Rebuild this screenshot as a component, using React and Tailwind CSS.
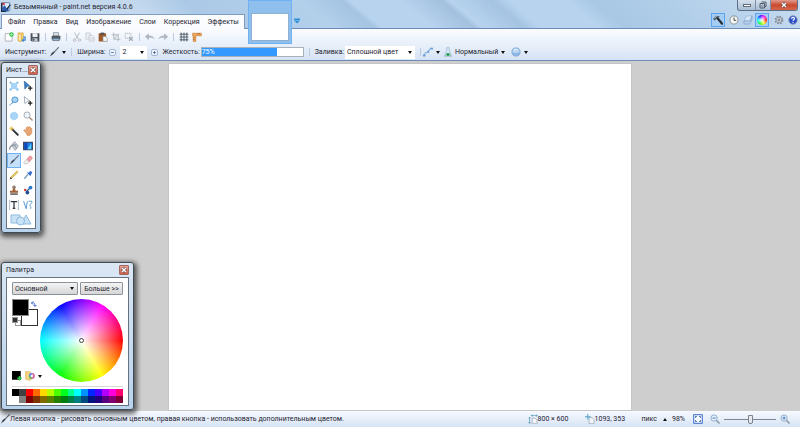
import { useState } from 'react'

// ── Data ───────────────────────────────────────────────────────────────────────

const MENU = ['Файл', 'Правка', 'Вид', 'Изображение', 'Слои', 'Коррекция', 'Эффекты']

const SWATCHES = [
  '#000000', '#404040', '#ff0000', '#ff6a00', '#ffd800', '#b6ff00', '#4cff00', '#00ff21',
  '#00ff90', '#00ffff', '#0094ff', '#0026ff', '#4800ff', '#b200ff', '#ff00dc', '#ff006e',
  '#ffffff', '#808080', '#7f0000', '#7f3300', '#7f6a00', '#5b7f00', '#267f00', '#007f0e',
  '#007f46', '#007f7f', '#004a7f', '#00137f', '#21007f', '#57007f', '#7f006e', '#7f0037',
]

// ── Icons ──────────────────────────────────────────────────────────────────────

function Icon({ size = 'size-[10px]', children }) {
  return (
    <svg className={`${size} shrink-0`} viewBox="0 0 16 16" fill="none" aria-hidden="true">
      {children}
    </svg>
  )
}

const AppIcon = () => (
  <Icon>
    <path d="M2 1h12v13H2z" fill="#dfe9f6" stroke="#3b5f96" />
    <path d="M2 9l4-4 3 5 3-2v7H2z" fill="#2f62b5" />
    <path d="M2 1h4v4H2z" fill="#c9474a" />
    <path d="M1 1v14h7" stroke="#1d2d4d" strokeWidth="2" />
    <path d="M15 4L9 12" stroke="#1a2b4c" strokeWidth="2" />
  </Icon>
)

const NewIcon = () => (
  <Icon>
    <path d="M2 2.500h8l3 3v9H2z" fill="#fff" stroke="#8a9096" />
    <circle cx="12" cy="4" r="3.500" fill="#35c24a" />
    <path d="M12 2v4M10 4h4" stroke="#d9ffd9" />
  </Icon>
)

const OpenIcon = () => (
  <Icon>
    <path d="M2 1.500h8v13H2z" fill="#f6d270" stroke="#d6a33a" />
    <path d="M2 1.500l5 3v11l-5-2z" fill="#ffe9a6" stroke="#d6a33a" />
    <path d="M10 8h3v5H9" stroke="#3d86d8" strokeWidth="2" />
    <path d="M7 13l4-3v6z" fill="#3d86d8" />
  </Icon>
)

const SaveIcon = () => (
  <Icon>
    <path d="M1 2h14v13H3l-2-2z" fill="#4b5159" />
    <rect x="4" y="2" width="8" height="6" fill="#eef2f7" />
    <rect x="4" y="10" width="8" height="5" fill="#c5ccd6" />
    <rect x="5" y="11" width="2" height="3" fill="#33383e" />
  </Icon>
)

const PrintIcon = () => (
  <Icon>
    <path d="M4 1h8v5H4z" fill="#dfe5ec" stroke="#6b7684" />
    <rect x="1" y="6" width="14" height="6" rx="1" fill="#4f5863" />
    <rect x="3" y="10" width="10" height="4" fill="#90b8e0" stroke="#59636f" />
  </Icon>
)

const CutIcon = () => (
  <Icon>
    <path d="M4 1l6 10M12 1L6 11" stroke="#b4bac3" strokeWidth="1.500" />
    <circle cx="4" cy="13" r="2" stroke="#b4bac3" strokeWidth="1.500" />
    <circle cx="12" cy="13" r="2" stroke="#b4bac3" strokeWidth="1.500" />
  </Icon>
)

const CopyIcon = () => (
  <Icon>
    <path d="M1.500 1.500h7v10h-7z" fill="#eceff3" stroke="#bcc1c9" />
    <path d="M6.500 5.500h5l3 3v6h-8z" fill="#f2f4f7" stroke="#b4bac3" />
    <path d="M8 9.500h5M8 11.500h5" stroke="#c5c9d0" />
  </Icon>
)

const PasteIcon = () => (
  <Icon>
    <rect x="1" y="2" width="12" height="13" rx="1" fill="#9c5a2c" />
    <rect x="4" y="1" width="6" height="3" fill="#4a4f56" />
    <path d="M8 7h4l3 3v5H8z" fill="#f5f5f5" stroke="#8a8f96" />
  </Icon>
)

const CropIcon = () => (
  <Icon>
    <path d="M4.500 1v10.500H15M1 4.500h10.500V15M4.500 11.500l8-9" stroke="#b0b6bf" strokeWidth="1.500" />
  </Icon>
)

const DeselectIcon = () => (
  <Icon>
    <rect x="2" y="2" width="9" height="8" stroke="#b0b6bf" strokeWidth="1.500" strokeDasharray="2 1" />
    <path d="M8 8l6 6M14 8l-6 6" stroke="#a4abb5" strokeWidth="2" />
  </Icon>
)

const UndoIcon = ({ redo }) => (
  <Icon>
    <g transform={redo ? 'matrix(-1 0 0 1 16 0)' : undefined}>
      <path d="M0 7.500L6 2v3.500c5 0 8.500 2 9.500 7-2.500-3-5-3.500-9.500-3V13z" fill="#b0b7c1" />
    </g>
  </Icon>
)

const GridIcon = () => (
  <Icon>
    <path d="M3.500 1v14M8 1v14M12.500 1v14M1 3.500h14M1 8h14M1 12.500h14" stroke="#4d5764" strokeWidth="1.500" />
  </Icon>
)

const RulerIcon = () => (
  <Icon>
    <path d="M1 2h14v4H6v9H2V6H1z" fill="#efa75c" stroke="#c9762c" />
    <path d="M9 2v2M12 2v2M2 9h2M2 12h2" stroke="#8c4a12" />
  </Icon>
)

const BrushShape = () => (
  <>
    <path d="M15 1L7 9.500" stroke="#6b7580" strokeWidth="2" strokeLinecap="round" />
    <path d="M8 8l-4 4" stroke="#3a424c" strokeWidth="2.500" />
    <path d="M4.500 10.500L1 15l4.500-2.500z" fill="#3a424c" />
  </>
)

const BrushIcon = () => <Icon><BrushShape /></Icon>

const CurveIcon = () => (
  <Icon>
    <path d="M2 14C3 6 7 11 9 7s1-5 5-5" stroke="#5b92cf" strokeWidth="1.500" />
    <path d="M0 12h4v3H0zM7 6h3v3H7zM12 1h4v3h-4z" fill="#6a9fd8" />
  </Icon>
)

const FlaskIcon = () => (
  <Icon>
    <path d="M6 1h4v5l4 9H2l4-9z" fill="#dcebf7" stroke="#90aecb" />
    <path d="M5 9.500h6l2 5H3z" fill="#8fd0b0" />
    <circle cx="8" cy="12" r="2" fill="#178a4c" />
  </Icon>
)

const SphereIcon = () => (
  <Icon>
    <circle cx="8" cy="8" r="6.500" fill="#b9d6f4" stroke="#7ea6d4" strokeWidth="1.500" />
    <path d="M2 8c4 2 8 2 12 0v3l-4 3H6l-4-3z" fill="#8cb5e2" />
    <path d="M4 6c1-3 5-4 8-1-3-1-5 0-8 1z" fill="#f1f8ff" />
  </Icon>
)

const HammerIcon = () => (
  <Icon>
    <path d="M0 6l5-5 6 1.500-2 1.500v3L7 8 5 5.500 3 9z" fill="#4a5461" />
    <path d="M8 6l6.500 8" stroke="#272d35" strokeWidth="3.500" strokeLinecap="round" />
    <path d="M2 5l4-3" stroke="#b9c6d4" strokeWidth="1.500" />
  </Icon>
)

const ClockIcon = () => (
  <Icon>
    <circle cx="8" cy="8" r="6.500" fill="#f5f7f0" stroke="#9aa4ae" strokeWidth="2" />
    <path d="M8 4v4.500h3.500" stroke="#3b434c" strokeWidth="1.500" />
  </Icon>
)

const LayersIcon = () => (
  <Icon>
    <path d="M5.500 1.500h9l-3.500 8H1.500z" fill="#d5e6f8" stroke="#8fafd1" />
    <path d="M1.500 9.500H11l3.500-8v5L11 14.500H1.500z" fill="#b3cdea" stroke="#7e9fc3" />
  </Icon>
)

const GearIcon = () => (
  <Icon>
    <circle cx="8" cy="8" r="6" stroke="#7e8894" strokeWidth="2" strokeDasharray="2.700 2" />
    <circle cx="8" cy="8" r="4.500" fill="#c3cad3" stroke="#8b95a1" strokeWidth="1.500" />
    <circle cx="8" cy="8" r="1.500" fill="#6b7580" />
  </Icon>
)

const HelpIcon = () => (
  <Icon>
    <circle cx="8" cy="8" r="6.800" fill="#2a4fcc" stroke="#8b97b8" strokeWidth="1.500" />
    <path d="M5.800 6.200c0-3.200 4.600-3 4.600-.4 0 1.700-2.300 1.700-2.300 3.600M8 11v1.800" stroke="#fff" strokeWidth="1.800" />
  </Icon>
)

const ZoomIcon = ({ plus }) => (
  <Icon>
    <path d="M9.500 9.500l5 5" stroke="#8b98a8" strokeWidth="2.500" strokeLinecap="round" />
    <circle cx="6.500" cy="6.500" r="5" fill="#e6f1fc" stroke="#8fa9c6" strokeWidth="1.500" />
    <path d={plus ? 'M4 6.500h5M6.500 4v5' : 'M4 6.500h5'} stroke="#3c74b8" strokeWidth="1.500" />
  </Icon>
)

const FitIcon = () => (
  <Icon>
    <rect x="1" y="1" width="14" height="14" rx="1" fill="#f4f8ff" stroke="#5b84d6" strokeWidth="2" />
    <path d="M4 6V4h2M10 4h2v2M12 10v2h-2M6 12H4v-2" stroke="#34527f" strokeWidth="1.500" />
  </Icon>
)

const SizeIcon = () => (
  <Icon>
    <path d="M6.500 6.500h5l3 3v6h-8z" fill="#f1f4f8" stroke="#8b98a6" />
    <path d="M2.500 5v10M1 7l1.500-2L4 7M1 13l1.500 2L4 13M5 2.500h10M7 1L5 2.500 7 4M13 1l2 1.500L13 4" stroke="#3f8fb5" />
  </Icon>
)

const CursorPosIcon = () => (
  <Icon>
    <path d="M6.500 5.500h5l3 3v7h-8z" fill="#f1f4f8" stroke="#8b98a6" />
    <path d="M4.500 0v9M0 4.500h9" stroke="#4b9cc4" strokeWidth="1.500" />
  </Icon>
)

const AddSwatchIcon = () => (
  <Icon>
    <rect width="14" height="14" fill="#000" />
    <path d="M12 8v7M8.500 11.500h7" stroke="#2fd046" strokeWidth="2.500" />
  </Icon>
)

const PaletteFileIcon = () => (
  <Icon>
    <path d="M1 1h6l3 2v10l-2 2-7-2z" fill="#f5d583" stroke="#d9ac4d" />
    <circle cx="11" cy="8" r="3.500" fill="#fff" stroke="#e2589b" strokeWidth="2.500" />
    <path d="M7.500 8A3.500 3.500 0 0 1 11 4.500" stroke="#4b9df0" strokeWidth="2.500" />
    <path d="M11 11.500A3.500 3.500 0 0 1 7.500 8" stroke="#57c55b" strokeWidth="2.500" />
  </Icon>
)

const Arrow = () => (
  <svg className="h-[3px] w-[4px] shrink-0" viewBox="0 0 8 6" aria-hidden="true">
    <path d="M0 0h8L4 6z" fill="#111" />
  </svg>
)

const CloseGlyph = () => (
  <svg className="size-[6px]" viewBox="0 0 12 12" aria-hidden="true">
    <path d="M2 2l8 8M10 2l-8 8" stroke="#5d3a3a" strokeWidth="5" />
    <path d="M2 2l8 8M10 2l-8 8" stroke="#fff" strokeWidth="3" />
  </svg>
)

// Toolbox entries in grid order, left to right
const TOOLS = [
  ['Прямоугольное выделение', <>
    <rect x="3" y="3" width="10" height="10" fill="#a8d5f7" />
    <path d="M1 1h3v3H1zM12 1h3v3h-3zM1 12h3v3H1zM12 12h3v3h-3z" fill="#6fb4e8" />
  </>],
  ['Перемещение содержимого', <>
    <path d="M2 0l9 8-4 .5L3 13z" fill="#3d7fc6" stroke="#2a5e9c" />
    <path d="M11.500 8v7M8 11.500h7" stroke="#222" strokeWidth="2" />
  </>],
  ['Лассо', <>
    <ellipse cx="9.500" cy="6" rx="5" ry="4.500" fill="#a9d3f5" stroke="#4b93cf" strokeWidth="1.500" />
    <path d="M5 9c2 2 0 3-1 3s-2 2-3 3" stroke="#3c7fb8" strokeWidth="1.500" />
  </>],
  ['Перемещение выделения', <>
    <path d="M2 1l9 7-4 .5L3 12z" fill="#fff" stroke="#6c7f96" />
    <path d="M11.500 8v7M8 11.500h7" stroke="#222" strokeWidth="2" />
  </>],
  ['Овальное выделение', <circle cx="8" cy="8" r="6" fill="#a8d5f7" stroke="#7fbbe8" strokeDasharray="2 1" />],
  ['Масштаб', <>
    <path d="M9.500 9.500l5 5" stroke="#a9927c" strokeWidth="2.500" strokeLinecap="round" />
    <circle cx="6.500" cy="6.500" r="5" fill="#eef4fa" stroke="#a0a9b4" strokeWidth="1.500" />
  </>],
  ['Волшебная палочка', <>
    <path d="M5 5l9 9" stroke="#2e3136" strokeWidth="3" strokeLinecap="round" />
    <path d="M4 0v8M0 4h8M1.500 1.500l5 5M6.500 1.500l-5 5" stroke="#e8c04a" />
  </>],
  ['Рука', <path d="M4 10L1 7l1-1 3 1V3l2-2 2 1 2-1 1 2 2 1v7l-3 4H7z" fill="#e9a674" stroke="#c98650" />],
  ['Заливка', <>
    <path d="M4 7l5-6 6 7-5 7z" fill="#cdd3da" stroke="#7b8591" />
    <path d="M1 14c0-4 1-6 4-7l7-1" stroke="#8b95a1" strokeWidth="2" />
    <path d="M7 4l5 8" stroke="#8b95a1" strokeWidth="1.500" />
  </>],
  ['Градиент', <>
    <rect x="1" y="2" width="14" height="12" fill="#1e7fe8" stroke="#27364c" strokeWidth="1.500" />
    <path d="M2 3h5v10H2z" fill="#1247b8" />
    <path d="M13 4v9H7z" fill="#5fd4f5" />
  </>],
  ['Кисть', <BrushShape />],
  ['Ластик', <>
    <path d="M6 7l4-5h3l2 3-5 6z" fill="#f09ca4" stroke="#cf8888" />
    <path d="M1 12l5-5 4 4-3 3H2z" fill="#f4f0f0" stroke="#b9adad" />
  </>],
  ['Карандаш', <>
    <path d="M3 13L14 2" stroke="#b58a2b" strokeWidth="3" />
    <path d="M3 13L14 2" stroke="#f0d86c" strokeWidth="1.800" />
    <path d="M1 15l1.500-4 2.500 2.500z" fill="#444" />
  </>],
  ['Пипетка', <>
    <path d="M2 14l6-7" stroke="#8aa8c6" strokeWidth="2.500" />
    <path d="M6 4l6 6 1-3 2-3-3-3-3 3z" fill="#3c6fd0" />
  </>],
  ['Штамп', <>
    <circle cx="8" cy="3.500" r="2.800" fill="#8f8078" />
    <path d="M6.500 5h3l1 4h4v3.500h-13V9h4z" fill="#a3623a" />
    <path d="M2 14.500h12" stroke="#333" strokeWidth="2" />
  </>],
  ['Замена цвета', <>
    <path d="M5 11l7-7" stroke="#24558f" strokeWidth="2" />
    <circle cx="12" cy="4" r="3" fill="#2a78d0" />
    <circle cx="3.500" cy="8" r="2" fill="#cf3c3c" />
    <circle cx="7" cy="12" r="3" fill="#24508f" />
  </>],
  ['Текст', <>
    <path d="M3 2.500h10M8 2.500v11M6 13.500h4" stroke="#2c333c" strokeWidth="2" />
    <path d="M1 1v14M15 1v14M0 1h2M0 15h2M14 1h2M14 15h2" stroke="#7e95ae" />
  </>],
  ['Линия или кривая', <>
    <path d="M1 2l4 12L7 2" stroke="#4d93cf" strokeWidth="1.500" />
    <path d="M9 2h5c2 3-4 5-3 7s3 3 1 5" stroke="#4d93cf" strokeWidth="1.500" />
  </>],
]

// ── Shared pieces ──────────────────────────────────────────────────────────────

const Sep = () => <span className="mx-[2px] h-[8px] w-px shrink-0 bg-[#bccbe0]" />

function IconButton({ label, className = '', children }) {
  return (
    <button type="button" aria-label={label} className={`flex shrink-0 items-center ${className}`}>
      {children}
    </button>
  )
}

function Combo({ id, label, className, options }) {
  return (
    <span className={`relative flex items-center ${className}`}>
      <select id={id} aria-label={label} className="h-full w-full appearance-none bg-transparent pl-[2px]">
        {options.map((o) => <option key={o}>{o}</option>)}
      </select>
      <span className="pointer-events-none absolute right-[3px]"><Arrow /></span>
    </span>
  )
}

function FloatingPanel({ title, className, bodyClass, children }) {
  return (
    <section
      aria-label={title}
      className={`absolute rounded-[3px] border border-[#3f4a57] bg-linear-to-b from-[#dbe7f3] to-[#b9d3ec] px-[4px] pb-[3px] shadow-[1px_2px_5px_2px_rgba(0,0,0,0.6)] ${className}`}
    >
      <header className="flex h-[14px] items-center justify-between">
        <h2>{title}</h2>
        <button
          type="button"
          aria-label="Закрыть"
          className="flex size-[10px] shrink-0 items-center justify-center rounded-[1px] border border-[#a0685f] bg-linear-to-b from-[#e3a396] to-[#cf5d46]"
        >
          <CloseGlyph />
        </button>
      </header>
      <div className={`border border-[#66727f] bg-white ${bodyClass}`}>{children}</div>
    </section>
  )
}

// ── Title bar and menu ─────────────────────────────────────────────────────────

function TitleBar() {
  return (
    <div className="flex h-[14px] items-start justify-between pr-[2px]">
      <div className="flex h-[13px] items-center gap-[3px] pl-[1px]">
        <AppIcon />
        <h1>Безымянный - paint.net версия 4.0.6</h1>
      </div>
      <div className="flex h-[11px] overflow-hidden rounded-b-[3px] border border-t-0 border-[#5b6f87] bg-linear-to-b from-[#d5e0ec] to-[#a9bdd3]">
        <button type="button" aria-label="Свернуть" className="flex w-[18px] items-center justify-center border-r border-[#7b8fa8]">
          <span className="h-[3px] w-[8px] border border-[#5f6b7a] bg-white" />
        </button>
        <button type="button" aria-label="Развернуть" className="flex w-[15px] items-center justify-center border-r border-[#7b8fa8]">
          <svg className="size-[8px]" viewBox="0 0 16 16" fill="none" aria-hidden="true">
            <path d="M5 2h9v9h-3M2 5h9v9H2z" stroke="#505c6b" strokeWidth="2" />
            <path d="M5 8h3v3H5z" fill="#fff" stroke="#505c6b" />
          </svg>
        </button>
        <button type="button" aria-label="Закрыть" className="flex w-[26px] items-center justify-center bg-linear-to-b from-[#e09a8c] via-[#c9492f] to-[#d4674c]">
          <CloseGlyph />
        </button>
      </div>
    </div>
  )
}

function MenuRow() {
  return (
    <div className="flex h-[15px] items-stretch justify-between border-b border-[#6d8cb8]">
      <div className="flex">
        <nav className="-mb-px ml-[1px] flex items-center gap-[8px] border-x border-t border-[#7f9cc2] bg-[#fafcff] pl-[6px] pr-[5px]">
          {MENU.map((m) => <button key={m} type="button">{m}</button>)}
        </nav>
        <div className="relative ml-[3px] w-[44px]">
          <button
            type="button"
            aria-label="Безымянный"
            className="absolute bottom-[-16px] left-0 h-[44px] w-[44px] border border-[#6fb1f2] bg-[#8fbfec] px-[2px] pb-[2px] pt-[12px]"
          >
            <span className="block h-full border border-[#8fb0d2] bg-white" />
          </button>
        </div>
        <IconButton label="Список изображений" className="ml-[2px]">
          <svg className="size-[6px]" viewBox="0 0 12 12" aria-hidden="true">
            <path d="M0 1h12v3H0zM0 5h12l-6 6z" fill="#2f8fd8" />
          </svg>
        </IconButton>
      </div>
      <div className="flex items-center gap-[2px] pb-[2px] pr-[2px]">
        <IconButton label="Инструменты" className="border border-[#5aa5ee] bg-[#a5cdf3] p-px"><HammerIcon /></IconButton>
        <IconButton label="Журнал" className="ml-[2px]"><ClockIcon /></IconButton>
        <IconButton label="Слои" className="ml-[2px]"><LayersIcon /></IconButton>
        <IconButton label="Палитра" className="border border-[#5aa5ee] bg-[#a5cdf3] p-px">
          <span className="size-[10px] rounded-full bg-[radial-gradient(closest-side,white,transparent),conic-gradient(from_90deg,red,yellow,lime,cyan,blue,magenta,red)]" />
        </IconButton>
        <span className="h-[8px] w-px bg-[#b9cfe6]" />
        <IconButton label="Параметры"><GearIcon /></IconButton>
        <IconButton label="Справка" className="ml-[2px]"><HelpIcon /></IconButton>
      </div>
    </div>
  )
}

// ── Toolbars ───────────────────────────────────────────────────────────────────

function MainToolbar() {
  return (
    <div className="flex h-[15px] items-center gap-[3px] pl-[4px]">
      <IconButton label="Создать"><NewIcon /></IconButton>
      <IconButton label="Открыть"><OpenIcon /></IconButton>
      <IconButton label="Сохранить"><SaveIcon /></IconButton>
      <Sep />
      <IconButton label="Печать"><PrintIcon /></IconButton>
      <Sep />
      <IconButton label="Вырезать"><CutIcon /></IconButton>
      <IconButton label="Копировать"><CopyIcon /></IconButton>
      <IconButton label="Вставить"><PasteIcon /></IconButton>
      <IconButton label="Обрезать"><CropIcon /></IconButton>
      <IconButton label="Отменить выделение"><DeselectIcon /></IconButton>
      <Sep />
      <IconButton label="Отменить"><UndoIcon /></IconButton>
      <IconButton label="Вернуть"><UndoIcon redo /></IconButton>
      <Sep />
      <IconButton label="Сетка"><GridIcon /></IconButton>
      <IconButton label="Линейки"><RulerIcon /></IconButton>
    </div>
  )
}

function StepIcon({ plus }) {
  return (
    <svg className="size-[7px]" viewBox="0 0 14 14" fill="none" aria-hidden="true">
      <rect x="1" y="1" width="12" height="12" rx="3" fill="#eef4fc" stroke="#8fa3c6" strokeWidth="1.500" />
      <path d={plus ? 'M4 7h6M7 4v6' : 'M4 7h6'} stroke="#3c5c99" strokeWidth="1.500" />
    </svg>
  )
}

function ToolOptions() {
  const [hardness, setHardness] = useState(75)

  return (
    <div className="flex h-[16px] items-center gap-[3px] pl-[5px]">
      <span>Инструмент:</span>
      <IconButton label="Выбор инструмента" className="gap-[3px]"><BrushIcon /><Arrow /></IconButton>
      <Sep />
      <label htmlFor="brush-width">Ширина:</label>
      <IconButton label="Уменьшить ширину" className="mx-px"><StepIcon /></IconButton>
      <Combo id="brush-width" className="h-[13px] w-[27px] bg-white" options={['2', '3', '4', '5', '10']} />
      <IconButton label="Увеличить ширину" className="mx-px"><StepIcon plus /></IconButton>
      <div className="flex items-center gap-px">
        <label htmlFor="hardness">Жесткость:</label>
        <span className="relative flex h-[10px] w-[103px] items-center border border-[#a9b1bb] bg-white">
          <span className="absolute inset-y-0 left-0 bg-[#3399ff]" style={{ width: `${hardness}%` }} />
          <span className="relative text-white">{hardness}%</span>
          <input
            id="hardness"
            type="range"
            value={hardness}
            onChange={(e) => setHardness(Number(e.target.value))}
            className="absolute inset-0 h-full w-full opacity-0"
          />
        </span>
      </div>
      <Sep />
      <div className="flex items-center gap-px">
        <label htmlFor="fill">Заливка:</label>
        <Combo id="fill" className="h-[13px] w-[70px] bg-white" options={['Сплошной цвет']} />
      </div>
      <div className="flex items-center">
        <Sep />
        <IconButton label="Сглаживание" className="gap-[3px]"><CurveIcon /><Arrow /></IconButton>
      </div>
      <div className="flex items-center">
        <FlaskIcon />
        <Combo id="blend" label="Режим смешивания" className="h-[13px] w-[55px]" options={['Нормальный']} />
      </div>
      <IconButton label="Обрезка выделения" className="gap-[3px]"><SphereIcon /><Arrow /></IconButton>
    </div>
  )
}

// ── Floating windows ───────────────────────────────────────────────────────────

function ToolsPanel() {
  return (
    <FloatingPanel title="Инст..." className="left-px top-px w-[40px]" bodyClass="h-[152px] py-px">
      <div className="grid h-full auto-rows-fr grid-cols-2">
        {TOOLS.map(([name, shape]) => (
          <button
            key={name}
            type="button"
            aria-label={name}
            className={`flex items-center justify-center border ${name === 'Кисть' ? 'border-[#6fb1f2] bg-[#c5e0fa]' : 'border-transparent'}`}
          >
            <Icon>{shape}</Icon>
          </button>
        ))}
        <button type="button" aria-label="Фигуры" className="col-span-2 flex items-center justify-center">
          <svg className="h-[12px] w-[22px]" viewBox="0 0 44 24" aria-hidden="true">
            <g fill="#c9e2f5" stroke="#8ebadf" strokeWidth="2">
              <path d="M2 2h18v16H2z" />
              <path d="M32 2l10 18H23z" />
              <circle cx="21" cy="14" r="8" />
            </g>
          </svg>
        </button>
      </div>
    </FloatingPanel>
  )
}

function PalettePanel() {
  const frame = 'h-[13px] rounded-[1px] border border-[#8c9299] bg-linear-to-b from-[#f4f4f4] to-[#d6d6d6]'

  return (
    <FloatingPanel title="Палитра" className="bottom-px left-px w-[133px]" bodyClass="px-[5px] pb-[2px] pt-[4px]">
      <div className="flex justify-between">
        <Combo id="color-slot" label="Цвет" className={`w-[66px] ${frame}`} options={['Основной', 'Дополнительный']} />
        <button type="button" className={`flex w-[43px] items-center justify-center ${frame}`}>Больше &gt;&gt;</button>
      </div>
      <div className="mt-[4px] flex justify-between">
        <div className="flex flex-col justify-between">
          <div className="relative size-[27px]">
            <button type="button" aria-label="Дополнительный цвет" className="absolute bottom-0 right-[1px] size-[17px] border border-[#333] bg-white" />
            <button type="button" aria-label="Основной цвет" className="absolute left-0 top-0 size-[17px] border border-[#8a8a8a] bg-black" />
            <button type="button" aria-label="Поменять цвета" className="absolute right-[2px] top-[2px]">
              <svg className="size-[6px]" viewBox="0 0 12 12" fill="none" aria-hidden="true">
                <path d="M1 4c5-2 7 1 7 6M4 1L1 4l3 3M5 8l3 3 3-3" stroke="#3f62cc" strokeWidth="2" />
              </svg>
            </button>
            <span className="absolute bottom-0 left-[3px] size-[6px] border border-[#999] bg-white" />
            <span className="absolute bottom-[3px] left-0 size-[6px] border border-[#999] bg-[#333]" />
          </div>
          <div className="flex items-center gap-[3px] pb-[1px]">
            <IconButton label="Добавить цвет"><AddSwatchIcon /></IconButton>
            <IconButton label="Файлы палитры" className="gap-[3px]"><PaletteFileIcon /><Arrow /></IconButton>
          </div>
        </div>
        <div className="-ml-[2px] flex size-[83px] shrink-0 items-center justify-center rounded-full bg-[radial-gradient(closest-side,white,transparent),conic-gradient(from_90deg,red,yellow,lime,cyan,blue,magenta,red)]">
          <span className="size-[5px] rounded-full border border-[#444] bg-white" />
        </div>
      </div>
      <div className="mt-[4px] grid grid-cols-16 border-t border-[#d8d8d8] pt-[2px]">
        {SWATCHES.map((c) => (
          <button key={c} type="button" aria-label={c} className="h-[7px]" style={{ background: c }} />
        ))}
      </div>
    </FloatingPanel>
  )
}

// ── Status bar ─────────────────────────────────────────────────────────────────

function StatusBar() {
  return (
    <footer className="flex h-[16px] items-center bg-linear-to-b from-[#f7faff] to-[#d6e3f4] pr-[10px]">
      <BrushIcon />
      <p className="whitespace-nowrap">
        Левая кнопка - рисовать основным цветом, правая кнопка - использовать дополнительным цветом.
      </p>
      <div className="ml-auto flex items-center">
        <SizeIcon />
        <span className="w-[47px] whitespace-nowrap">800 × 600</span>
        <CursorPosIcon />
        <span className="w-[47px] whitespace-nowrap">1093, 353</span>
        <button type="button" className="mr-[5px] flex items-center gap-[6px]">
          пикс
          <svg className="h-[3px] w-[4px]" viewBox="0 0 8 6" aria-hidden="true"><path d="M4 0l4 6H0z" fill="#111" /></svg>
        </button>
        <span className="mr-[8px]">98%</span>
        <IconButton label="По размеру окна" className="mr-[7px]"><FitIcon /></IconButton>
        <IconButton label="Уменьшить"><ZoomIcon /></IconButton>
        <input
          type="range"
          aria-label="Масштаб"
          defaultValue="50"
          className="mx-[4px] h-[9px] w-[52px] appearance-none bg-[linear-gradient(#7d8794,#7d8794)] bg-[length:100%_1px] bg-center bg-no-repeat [&::-webkit-slider-thumb]:h-[9px] [&::-webkit-slider-thumb]:w-[5px] [&::-webkit-slider-thumb]:appearance-none [&::-webkit-slider-thumb]:rounded-b-[2px] [&::-webkit-slider-thumb]:border [&::-webkit-slider-thumb]:border-[#7a838f] [&::-webkit-slider-thumb]:bg-[#e6e9ee]"
        />
        <IconButton label="Увеличить"><ZoomIcon plus /></IconButton>
      </div>
    </footer>
  )
}

// ── App ────────────────────────────────────────────────────────────────────────

export default function App() {
  return (
    <div className="flex min-h-screen flex-col font-[Roboto,'Noto_Sans',sans-serif] text-[7px] leading-[10px] text-[#1e2430]">
      <header className="bg-[linear-gradient(40deg,#c6daee_0%,#c3d8ed_20%,#abc9e6_26%,#b3d0eb_40%,#a4c4e2_45%,#b7d3ee_46%,#b7d3ee_52%,#a3c0de_57%,#b7d3ee_58%,#a5c4e2_63%,#b7d3ee_65%,#b7d3ee_72%,#a8c8e4_75%,#b4d0ea_86%,#c6dcf1_100%)]">
        <TitleBar />
        <MenuRow />
      </header>
      <div className="border-b border-[#6d8cb8] bg-linear-to-b from-[#fafcff] to-[#d6e3f4]">
        <MainToolbar />
        <ToolOptions />
      </div>
      <main className="relative flex flex-1 justify-center bg-[#cecece] pb-px pt-[3px]">
        <div className="aspect-4/3 h-[346px] bg-white shadow-[0_0_1px_#999]" />
        <ToolsPanel />
        <PalettePanel />
      </main>
      <StatusBar />
    </div>
  )
}
